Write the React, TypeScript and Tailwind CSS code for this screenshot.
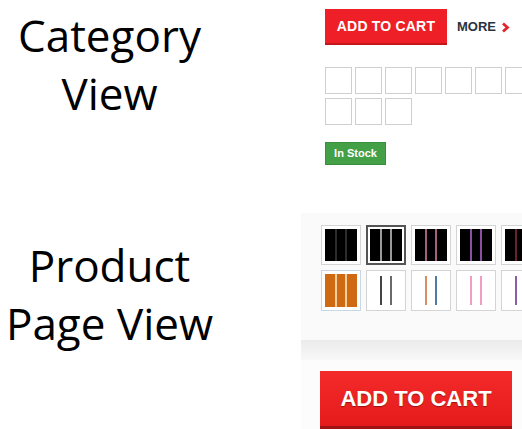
import React from "react";

const labelFont = { fontFamily: '"Open Sans", "Noto Sans", sans-serif' };

const topSwatches = [
  { bg: "bg-black", stripe: "bg-[#2c2c2c]", selected: false },
  { bg: "bg-black", stripe: "bg-[#9a9a9a]", selected: true },
  { bg: "bg-black", stripe: "bg-[#a65f7e]", selected: false },
  { bg: "bg-black", stripe: "bg-[#8d4fa3]", selected: false },
  { bg: "bg-black", stripe: "bg-[#6b2030]", selected: false },
];

const bottomSwatches = [
  { bg: "bg-[#cf6a12]", stripes: ["bg-[#f3cf9a]", "bg-[#f3cf9a]"], border: "border-[#c9d6e3]" },
  { bg: "bg-white", stripes: ["bg-[#444444]", "bg-[#6a6a6a]"], border: "border-[#d4d4d4]" },
  { bg: "bg-white", stripes: ["bg-[#d98e62]", "bg-[#4f7ca3]"], border: "border-[#d4d4d4]" },
  { bg: "bg-white", stripes: ["bg-[#f19cc2]", "bg-[#f19cc2]"], border: "border-[#d4d4d4]" },
  { bg: "bg-white", stripes: ["bg-[#8b5fa3]", "bg-white"], border: "border-[#d4d4d4]" },
];

export default function App() {
  return (
    <div className="w-[522px] h-[429px] overflow-hidden bg-white grid grid-cols-[301px_1fr] grid-rows-[213px_1fr] font-['Liberation_Sans',Arial,sans-serif]">
      {/* Category label */}
      <div className="pt-[6px]">
        <div className="w-[219px] text-center text-[44px] leading-[58px] text-black" style={labelFont}>
          Category
          <br />
          View
        </div>
      </div>

      {/* Category view widgets */}
      <div className="pt-[9px] pl-[24px] overflow-hidden">
        <div className="flex items-center">
          <button className="w-[122px] h-[36px] bg-[#ee1f26] border-b-2 border-[#c5161c] text-white font-bold text-[14px] tracking-[0.2px]">
            ADD TO CART
          </button>
          <div className="ml-[10px] flex items-center gap-[5px] text-[#2b3240] font-bold text-[13px]">
            <span>MORE</span>
            <svg width="9" height="11" viewBox="0 0 9 11">
              <path d="M2 1.5 L6.5 5.5 L2 9.5" fill="none" stroke="#e3262b" strokeWidth="2.8" />
            </svg>
          </div>
        </div>

        <div className="mt-[22px] w-[210px] flex flex-wrap gap-x-[3px] gap-y-[4px]">
          {[...Array(10)].map((_, i) => (
            <div key={i} className="w-[27px] h-[27px] border border-[#cfcfcf] bg-white" />
          ))}
        </div>

        <div className="mt-[17px] w-[61px] h-[23px] bg-[#43a047] border border-[#3a8f3e] text-white font-bold text-[11px] flex items-center justify-center">
          In Stock
        </div>
      </div>

      {/* Product page label */}
      <div className="pt-[23px]">
        <div className="w-[219px] text-center text-[44px] leading-[58px] text-black" style={labelFont}>
          Product
          <br />
          Page View
        </div>
      </div>

      {/* Product page widgets */}
      <div className="bg-[#fafafa] flex flex-col overflow-hidden">
        <div className="pt-[12px] pl-[20px] grid grid-cols-[repeat(5,40px)] gap-[5px]">
          {topSwatches.map((s, i) => (
            <div
              key={i}
              className={
                s.selected
                  ? "w-[40px] h-[40px] p-[2px] border-2 border-[#555555] bg-white"
                  : "w-[40px] h-[40px] p-[3px] border border-[#d4d4d4] bg-white"
              }
            >
              <div className={`w-full h-full ${s.bg} flex justify-center gap-[8px]`}>
                <div className={`w-[2px] h-full ${s.stripe}`} />
                <div className={`w-[2px] h-full ${s.stripe}`} />
              </div>
            </div>
          ))}
          {bottomSwatches.map((s, i) => (
            <div key={i} className={`w-[40px] h-[41px] p-[3px] border ${s.border} bg-white`}>
              <div className={`w-full h-full ${s.bg} flex justify-center gap-[8px] ${i === 0 ? "" : "py-[2px]"}`}>
                <div className={`w-[2px] h-full ${s.stripes[0]}`} />
                <div className={`w-[2px] h-full ${s.stripes[1]}`} />
              </div>
            </div>
          ))}
        </div>

        <div className="mt-[29px] h-[20px] bg-gradient-to-b from-[#ebebeb] to-[#f8f8f8]" />

        <div className="flex-1 bg-[#fcfcfc] pt-[11px] pl-[19px]">
          <button className="w-[192px] h-[58px] bg-gradient-to-b from-[#f42a2a] to-[#e51b1b] border-b-[3px] border-[#a01414] text-white font-bold text-[22px] [text-shadow:0_1px_1px_rgba(80,0,0,0.5)]">
            ADD TO CART
          </button>
        </div>
      </div>
    </div>
  );
}
